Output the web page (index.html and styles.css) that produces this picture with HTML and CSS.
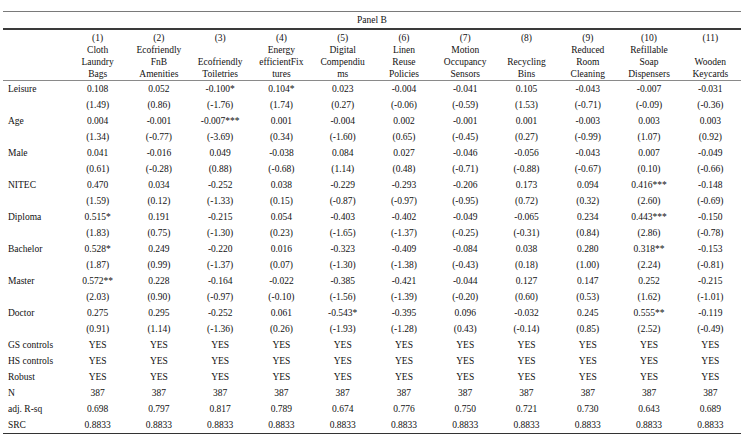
FILE: index.html
```html
<!DOCTYPE html>
<html>
<head>
<meta charset="utf-8">
<link rel="stylesheet" href="styles.css">
</head>
<body>
<table class="reg">
<colgroup>
<col class="c-label">
<col class="c-data"><col class="c-data"><col class="c-data"><col class="c-data"><col class="c-data"><col class="c-data"><col class="c-data"><col class="c-data"><col class="c-data"><col class="c-data"><col class="c-data">
</colgroup>
<thead>
<tr class="panel"><td colspan="12">Panel B</td></tr>
<tr class="nums"><td></td><td>(1)</td><td>(2)</td><td>(3)</td><td>(4)</td><td>(5)</td><td>(6)</td><td>(7)</td><td>(8)</td><td>(9)</td><td>(10)</td><td>(11)</td></tr>
<tr class="names"><td></td>
<td>Cloth<br>Laundry<br>Bags</td>
<td>Ecofriendly<br>FnB<br>Amenities</td>
<td>Ecofriendly<br>Toiletries</td>
<td>Energy<br>efficientFix<br>tures</td>
<td>Digital<br>Compendiu<br>ms</td>
<td>Linen<br>Reuse<br>Policies</td>
<td>Motion<br>Occupancy<br>Sensors</td>
<td>Recycling<br>Bins</td>
<td>Reduced<br>Room<br>Cleaning</td>
<td>Refillable<br>Soap<br>Dispensers</td>
<td>Wooden<br>Keycards</td>
</tr>
</thead>
<tbody>
<tr><td>Leisure</td><td>0.108</td><td>0.052</td><td>-0.100*</td><td>0.104*</td><td>0.023</td><td>-0.004</td><td>-0.041</td><td>0.105</td><td>-0.043</td><td>-0.007</td><td>-0.031</td></tr>
<tr><td></td><td>(1.49)</td><td>(0.86)</td><td>(-1.76)</td><td>(1.74)</td><td>(0.27)</td><td>(-0.06)</td><td>(-0.59)</td><td>(1.53)</td><td>(-0.71)</td><td>(-0.09)</td><td>(-0.36)</td></tr>
<tr><td>Age</td><td>0.004</td><td>-0.001</td><td>-0.007***</td><td>0.001</td><td>-0.004</td><td>0.002</td><td>-0.001</td><td>0.001</td><td>-0.003</td><td>0.003</td><td>0.003</td></tr>
<tr><td></td><td>(1.34)</td><td>(-0.77)</td><td>(-3.69)</td><td>(0.34)</td><td>(-1.60)</td><td>(0.65)</td><td>(-0.45)</td><td>(0.27)</td><td>(-0.99)</td><td>(1.07)</td><td>(0.92)</td></tr>
<tr><td>Male</td><td>0.041</td><td>-0.016</td><td>0.049</td><td>-0.038</td><td>0.084</td><td>0.027</td><td>-0.046</td><td>-0.056</td><td>-0.043</td><td>0.007</td><td>-0.049</td></tr>
<tr><td></td><td>(0.61)</td><td>(-0.28)</td><td>(0.88)</td><td>(-0.68)</td><td>(1.14)</td><td>(0.48)</td><td>(-0.71)</td><td>(-0.88)</td><td>(-0.67)</td><td>(0.10)</td><td>(-0.66)</td></tr>
<tr><td>NITEC</td><td>0.470</td><td>0.034</td><td>-0.252</td><td>0.038</td><td>-0.229</td><td>-0.293</td><td>-0.206</td><td>0.173</td><td>0.094</td><td>0.416***</td><td>-0.148</td></tr>
<tr><td></td><td>(1.59)</td><td>(0.12)</td><td>(-1.33)</td><td>(0.15)</td><td>(-0.87)</td><td>(-0.97)</td><td>(-0.95)</td><td>(0.72)</td><td>(0.32)</td><td>(2.60)</td><td>(-0.69)</td></tr>
<tr><td>Diploma</td><td>0.515*</td><td>0.191</td><td>-0.215</td><td>0.054</td><td>-0.403</td><td>-0.402</td><td>-0.049</td><td>-0.065</td><td>0.234</td><td>0.443***</td><td>-0.150</td></tr>
<tr><td></td><td>(1.83)</td><td>(0.75)</td><td>(-1.30)</td><td>(0.23)</td><td>(-1.65)</td><td>(-1.37)</td><td>(-0.25)</td><td>(-0.31)</td><td>(0.84)</td><td>(2.86)</td><td>(-0.78)</td></tr>
<tr><td>Bachelor</td><td>0.528*</td><td>0.249</td><td>-0.220</td><td>0.016</td><td>-0.323</td><td>-0.409</td><td>-0.084</td><td>0.038</td><td>0.280</td><td>0.318**</td><td>-0.153</td></tr>
<tr><td></td><td>(1.87)</td><td>(0.99)</td><td>(-1.37)</td><td>(0.07)</td><td>(-1.30)</td><td>(-1.38)</td><td>(-0.43)</td><td>(0.18)</td><td>(1.00)</td><td>(2.24)</td><td>(-0.81)</td></tr>
<tr><td>Master</td><td>0.572**</td><td>0.228</td><td>-0.164</td><td>-0.022</td><td>-0.385</td><td>-0.421</td><td>-0.044</td><td>0.127</td><td>0.147</td><td>0.252</td><td>-0.215</td></tr>
<tr><td></td><td>(2.03)</td><td>(0.90)</td><td>(-0.97)</td><td>(-0.10)</td><td>(-1.56)</td><td>(-1.39)</td><td>(-0.20)</td><td>(0.60)</td><td>(0.53)</td><td>(1.62)</td><td>(-1.01)</td></tr>
<tr><td>Doctor</td><td>0.275</td><td>0.295</td><td>-0.252</td><td>0.061</td><td>-0.543*</td><td>-0.395</td><td>0.096</td><td>-0.032</td><td>0.245</td><td>0.555**</td><td>-0.119</td></tr>
<tr><td></td><td>(0.91)</td><td>(1.14)</td><td>(-1.36)</td><td>(0.26)</td><td>(-1.93)</td><td>(-1.28)</td><td>(0.43)</td><td>(-0.14)</td><td>(0.85)</td><td>(2.52)</td><td>(-0.49)</td></tr>
<tr><td>GS controls</td><td>YES</td><td>YES</td><td>YES</td><td>YES</td><td>YES</td><td>YES</td><td>YES</td><td>YES</td><td>YES</td><td>YES</td><td>YES</td></tr>
<tr><td>HS controls</td><td>YES</td><td>YES</td><td>YES</td><td>YES</td><td>YES</td><td>YES</td><td>YES</td><td>YES</td><td>YES</td><td>YES</td><td>YES</td></tr>
<tr><td>Robust</td><td>YES</td><td>YES</td><td>YES</td><td>YES</td><td>YES</td><td>YES</td><td>YES</td><td>YES</td><td>YES</td><td>YES</td><td>YES</td></tr>
<tr><td>N</td><td>387</td><td>387</td><td>387</td><td>387</td><td>387</td><td>387</td><td>387</td><td>387</td><td>387</td><td>387</td><td>387</td></tr>
<tr><td>adj. R-sq</td><td>0.698</td><td>0.797</td><td>0.817</td><td>0.789</td><td>0.674</td><td>0.776</td><td>0.750</td><td>0.721</td><td>0.730</td><td>0.643</td><td>0.689</td></tr>
<tr class="last"><td>SRC</td><td>0.8833</td><td>0.8833</td><td>0.8833</td><td>0.8833</td><td>0.8833</td><td>0.8833</td><td>0.8833</td><td>0.8833</td><td>0.8833</td><td>0.8833</td><td>0.8833</td></tr>
</tbody>
</table>
</body>
</html>
```

FILE: styles.css
```css
html, body {
  margin: 0;
  padding: 0;
  background: #ffffff;
}

body {
  font-family: "Liberation Serif", "Times New Roman", serif;
  font-size: 9.5px;
  color: #111111;
}

.reg {
  margin: 11px 0 0 3px;
  width: 738px;
  table-layout: fixed;
  border-collapse: separate;
  border-spacing: 0;
}

.c-label {
  width: 64px;
}

.c-data {
  width: 61.27px;
}

.reg td {
  padding: 0;
  text-align: center;
  white-space: nowrap;
  line-height: 16px;
}

.reg td:first-child {
  text-align: left;
  padding-left: 5px;
}

.panel td {
  border-top: 1px solid #7a7a7a;
  border-bottom: 2px solid #3a3a3a;
  line-height: 16px;
  text-align: center;
  padding-left: 0;
}

.panel td:first-child {
  text-align: center;
  padding-left: 0;
}

.nums td {
  padding-top: 2px;
  line-height: 12px;
}

.names td {
  line-height: 12px;
  height: 36px;
  vertical-align: bottom;
  border-bottom: 1px solid #8a8a8a;
}

.last td {
  border-bottom: 1px solid #333333;
}
```
